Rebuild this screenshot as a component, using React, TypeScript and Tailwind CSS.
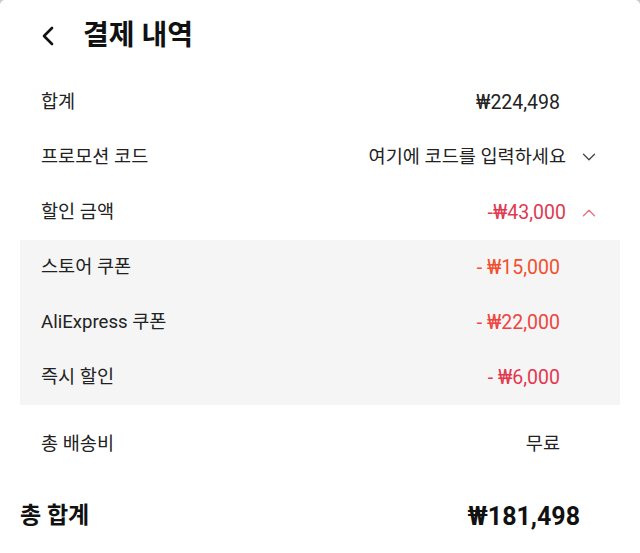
import { ChevronDown, ChevronUp } from 'lucide-react';

const font = { fontFamily: 'Roboto, "Noto Sans CJK KR", sans-serif' };

type Line = { label: string; value: string; color?: string };

// Discount breakdown shown inside the expanded gray panel
const coupons: Line[] = [
  { label: '스토어 쿠폰', value: '- ₩15,000', color: 'text-[#f1502f]' },
  { label: 'AliExpress 쿠폰', value: '- ₩22,000', color: 'text-[#ed4640]' },
  { label: '즉시 할인', value: '- ₩6,000', color: 'text-[#e4384f]' },
];

export default function App() {
  return (
    <div className="min-h-screen w-[640px] bg-[#c8c8c8]" style={font}>
      <div className="min-h-[553px] rounded-t-[5px] bg-white text-[#222]">
        {/* Header */}
        <div className="flex h-[71px] items-center pl-[40px]">
          <svg width="16" height="20" viewBox="0 0 16 20" className="mt-[1px]">
            <polyline
              points="12,2 4,10 12,18"
              fill="none"
              stroke="#111"
              strokeWidth="2.6"
              strokeLinecap="round"
              strokeLinejoin="round"
            />
          </svg>
          <h1 className="ml-[27px] text-[28px] font-bold text-[#111]">결제 내역</h1>
        </div>

        <div className="pt-[4px] text-[18.6px]">
          <div className="flex h-[55px] items-center justify-between pl-[41px] pr-[80px]">
            <span>합계</span>
            <span className="text-[19.5px]">₩224,498</span>
          </div>

          <div className="flex h-[55px] items-center justify-between pl-[41px] pr-[40px]">
            <span>프로모션 코드</span>
            <span className="flex items-center gap-[12px]">
              여기에 코드를 입력하세요
              <ChevronDown className="h-[22px] w-[22px] text-[#444]" strokeWidth={1.4} />
            </span>
          </div>

          <div className="flex h-[55px] items-center justify-between pl-[41px] pr-[40px]">
            <span>할인 금액</span>
            <span className="flex items-center gap-[12px] text-[19.5px] text-[#e03a50]">
              -₩43,000
              <ChevronUp className="h-[22px] w-[22px] text-[#e8707f]" strokeWidth={1.4} />
            </span>
          </div>

          <div className="mx-[20px] bg-[#f5f5f5]">
            {coupons.map((c) => (
              <div
                key={c.label}
                className="flex h-[55px] items-center justify-between pl-[21px] pr-[60px]"
              >
                <span>{c.label}</span>
                <span className={`text-[19.5px] ${c.color}`}>{c.value}</span>
              </div>
            ))}
          </div>

          <div className="mt-[12px] flex h-[55px] items-center justify-between pl-[41px] pr-[80px]">
            <span>총 배송비</span>
            <span>무료</span>
          </div>

          <div className="mt-[17px] flex h-[55px] items-center justify-between pl-[20px] pr-[60px] text-[23px] font-bold text-[#111]">
            <span>총 합계</span>
            <span className="text-[25px]">₩181,498</span>
          </div>
        </div>
      </div>
    </div>
  );
}
